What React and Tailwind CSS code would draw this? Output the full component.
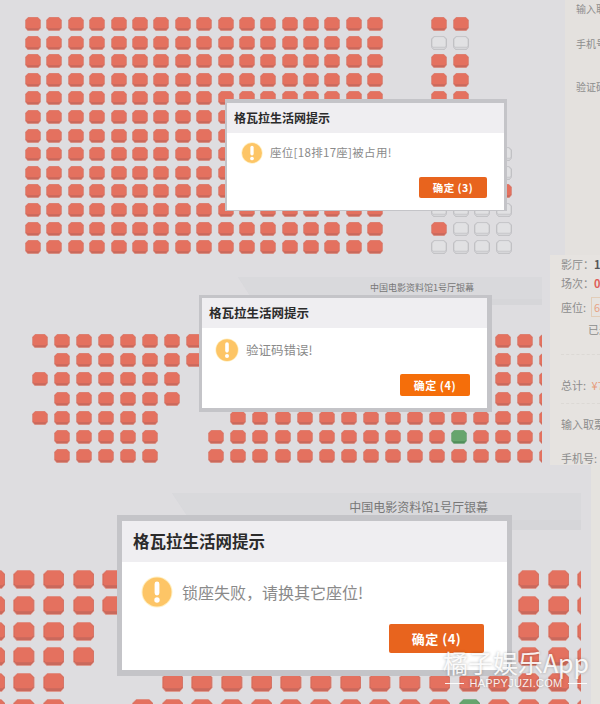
import React from "react";

const seatColors = {
    R: { outer: "#c9695c", inner: "#e4715f", line: "#e3978a" },
    G: { outer: "#4f8d5a", inner: "#66a56d", line: "#8fb996" },
    E: { outer: "#d6d6d9", inner: "#e1e1e3", line: "#aeaeb2" },
};

const Seat = ({ type, className }) => {
    const c = seatColors[type];
    return (
        <svg viewBox="0 0 16 14" preserveAspectRatio="none" className={className}>
            <path d="M3.2 .3H12.8L15.7 3.2V10.8L13.2 13.7H2.8L.3 10.8V3.2Z" fill={c.outer} stroke={c.line} strokeWidth=".6" />
            <path d="M3.5 .6H12.5L15 3.3V10L14 11.2H2L1 10V3.3Z" fill={c.inner} stroke={type === "E" ? "#bcbcc0" : "none"} strokeWidth=".6" />
        </svg>
    );
};

const SeatRows = ({ rows, rowClass, cellClass, seatClass }) => (
    <div className="flex flex-col">
        {rows.map((row, i) => (
            <div key={i} className={`flex shrink-0 ${rowClass}`}>
                {row.split("").map((s, j) => (
                    <div key={j} className={`shrink-0 ${cellClass}`}>
                        {s !== "." && <Seat type={s} className={seatClass} />}
                    </div>
                ))}
            </div>
        ))}
    </div>
);

const WarnIcon = ({ className }) => (
    <svg viewBox="0 0 32 32" className={`shrink-0 ${className}`}>
        <circle cx="16" cy="16" r="15.5" fill="#fff0c4" />
        <circle cx="16" cy="16" r="14.5" fill="#fdc566" />
        <rect x="13.6" y="5.5" width="4.8" height="14" rx="2.4" fill="#fff" />
        <circle cx="16" cy="24" r="2.7" fill="#fff" />
    </svg>
);

const Modal = ({ box, header, title, body, icon, row, message, button, label, count }) => (
    <div className={`absolute flex flex-col bg-white border-[#c4c4c8] ${box}`}>
        <div className={`flex items-center bg-[#efeef1] font-bold text-[#2b2b2b] ${header}`}>{title}</div>
        <div className={`flex flex-col ${body}`}>
            <div className={`flex items-center ${row}`}>
                <WarnIcon className={icon} />
                <span className={`text-[#8a8a8a] whitespace-nowrap ${message}`}>{label}</span>
            </div>
            <div className="flex justify-end">
                <div className={`flex items-center justify-center text-white font-bold rounded-[2px] tracking-[0.5px] ${button}`}>确定 ({count})</div>
            </div>
        </div>
    </div>
);

const Screen = ({ outer, inner, text }) => (
    <div className={`shrink-0 bg-[#d6d6d9] [clip-path:polygon(0_0,100%_0,100%_100%,6%_100%)] ${outer}`}>
        <div className={`flex items-center justify-end bg-[#d9d9dc] text-[#777] whitespace-nowrap ${inner}`}>{text}</div>
    </div>
);

const r17 = "R".repeat(17);
const hall1 = ["RR..", "EE..", "RR..", "RR..", "RR..", "RR..", "RR..", "RREE", "RREE", "RRER", "EEEE", "REEE", "EEEE"].map((s) => `${r17}..${s}`);

const hall2 = [
    "R".repeat(24),
    `.${"R".repeat(23)}`,
    `${"R".repeat(7)}.............RRRR`,
    `.${"R".repeat(6)}.............RRRR`,
    `${"R".repeat(6)}...${"R".repeat(15)}`,
    `.RRRRR..${"R".repeat(11)}G${"R".repeat(4)}`,
    `.RRRRR..${"R".repeat(16)}`,
];

const hall3 = [
    "R".repeat(21),
    "R".repeat(21),
    `RRRR.............RRRR`,
    `RRRR.............RRRR`,
    `RRR...${"R".repeat(15)}`,
    `RRR..${"R".repeat(11)}G${"R".repeat(4)}`,
];

export default function App() {
    return (
        <div className="relative flex flex-col w-[600px] h-[704px] overflow-hidden bg-[#dedde0] font-['Noto_Sans_CJK_SC','Liberation_Sans',sans-serif]">
            {/* first screenshot */}
            <section className="relative flex h-[255px] shrink-0">
                <div className="flex-1 pt-[17px] pl-[25px] overflow-hidden">
                    <SeatRows rows={hall1} rowClass="h-[18.6px]" cellClass="w-[21.4px]" seatClass="block w-4 h-[14px]" />
                </div>
                <aside className="flex flex-col w-[35px] shrink-0 pl-[11px] bg-[#e4e1de] text-[10px] text-[#8d8d8d] whitespace-nowrap overflow-hidden">
                    <p className="mt-[2px] h-[14px] leading-[14px]">输入取</p>
                    <p className="mt-[21px] h-[14px] leading-[14px]">手机号</p>
                    <p className="mt-[29px] h-[14px] leading-[14px]">验证码</p>
                </aside>
                <Modal
                    box="left-[225px] top-[99px] w-[282px] h-[112px] border-t-4 border-r-[3px] border-b border-l-2"
                    header="h-[30px] pl-[7px] text-[12px]"
                    title="格瓦拉生活网提示"
                    body="pt-[9px] pl-[14px] pr-[17px]"
                    row="gap-[7px] h-[22px] mb-[13px]"
                    icon="w-[22px] h-[22px]"
                    message="text-[11.5px] tracking-[0.3px]"
                    label="座位[18排17座]被占用!"
                    count={3}
                    button="w-[68px] h-[21px] bg-[#e8641e] text-[10.5px]"
                />
            </section>

            {/* second screenshot */}
            <section className="relative flex h-[210px] shrink-0">
                <div className="flex flex-col flex-1 pt-[22px] overflow-hidden">
                    <Screen outer="ml-[238px] w-[304px] h-[28px]" inner="h-[22px] pr-[68px] text-[9px]" text="中国电影资料馆1号厅银幕" />
                    <div className="mt-[29px] ml-[32px] w-[510px] overflow-hidden">
                        <SeatRows rows={hall2} rowClass="h-[19.2px]" cellClass="w-[22.05px]" seatClass="block w-4 h-[14px]" />
                    </div>
                </div>
                <aside className="flex flex-col w-[50px] shrink-0 pl-[11px] bg-[#e6e3e0] text-[11px] text-[#8d8d8d] whitespace-nowrap overflow-hidden">
                    <p className="mt-[1px] h-[16px] leading-[16px]">影厅：<b className="text-[#555]">1号</b></p>
                    <p className="mt-[3px] h-[16px] leading-[16px]">场次：<b className="text-[#e0605a]">04</b></p>
                    <div className="flex items-center gap-[5px] mt-[6px]">
                        <span>座位:</span>
                        <span className="flex items-center w-[40px] h-[20px] pl-[2px] border border-[#e2cdb8] text-[#e8a283] shrink-0">6</span>
                    </div>
                    <p className="mt-[4px] ml-[27px] h-[16px] leading-[16px]">已选</p>
                    <div className="mt-[17px] border-t border-dashed border-[#dcd9d5]" />
                    <p className="mt-[22px] h-[16px] leading-[16px]">总计: <span className="ml-[3px] text-[#e69a78]">¥7</span></p>
                    <div className="mt-[10px] border-t border-dashed border-[#dcd9d5]" />
                    <p className="mt-[12px] h-[16px] leading-[16px]">输入取票的</p>
                    <div className="flex items-center gap-[3px] mt-[14px]">
                        <span>手机号:</span>
                        <span className="w-[20px] h-[24px] border border-[#cfcfcf] bg-[#f0efed] shrink-0" />
                    </div>
                </aside>
                <Modal
                    box="left-[199px] top-[40px] w-[293px] h-[117px] border-t-[3px] border-r-[5px] border-b-4 border-l-[3px]"
                    header="h-[30px] pl-[7px] text-[12.5px]"
                    title="格瓦拉生活网提示"
                    body="pt-[10px] pl-[13px] pr-[17px]"
                    row="gap-[7px] h-[24px] mb-[12px]"
                    icon="w-[24px] h-[24px]"
                    message="text-[12.5px]"
                    label="验证码错误!"
                    count={4}
                    button="w-[70px] h-[22px] bg-[#f56e0a] text-[11px]"
                />
            </section>

            {/* third screenshot */}
            <section className="relative flex flex-1">
                <div className="flex flex-col flex-1 pt-[28px] overflow-hidden">
                    <Screen outer="ml-[172px] w-[409px] h-[37px]" inner="h-[27px] pr-[93px] text-[12px]" text="中国电影资料馆1号厅银幕" />
                    <div className="mt-[40px] w-[581px] overflow-hidden">
                        <div className="ml-[-16.5px]">
                            <SeatRows rows={hall3} rowClass="h-[25.8px]" cellClass="w-[29.7px]" seatClass="block w-[21.5px] h-[19px]" />
                        </div>
                    </div>
                </div>
                <aside className="w-[9px] shrink-0 bg-[#e5e3df]" />
                <Modal
                    box="left-[117px] top-[50px] w-[395px] h-[161px] border-t-[6px] border-r-[5px] border-b-[6px] border-l-[5px]"
                    header="h-[41px] pl-[11px] text-[16.5px]"
                    title="格瓦拉生活网提示"
                    body="pt-[14px] pl-[19px] pr-[23px]"
                    row="gap-[9px] h-[32px] mb-[16px]"
                    icon="w-[32px] h-[32px]"
                    message="text-[16px]"
                    label="锁座失败，请换其它座位!"
                    count={4}
                    button="w-[95px] h-[29px] bg-[#e8641e] text-[13px]"
                />
            </section>

            {/* watermark */}
            <div className="absolute left-[445px] top-[648px] flex flex-col items-center w-[142px] text-white/90 [text-shadow:0_0_3px_rgba(0,0,0,0.3)]">
                <span className="text-[25px] leading-[29px] whitespace-nowrap">橘子娱乐App</span>
                <div className="flex items-center gap-[5px] w-full mt-[-1px]">
                    <span className="flex-1 border-t border-white/90" />
                    <span className="text-[11px] leading-[14px] tracking-[0.3px] font-['Liberation_Sans',sans-serif]">HAPPYJUZI.COM</span>
                    <span className="flex-1 border-t border-white/90" />
                </div>
            </div>
        </div>
    );
}
